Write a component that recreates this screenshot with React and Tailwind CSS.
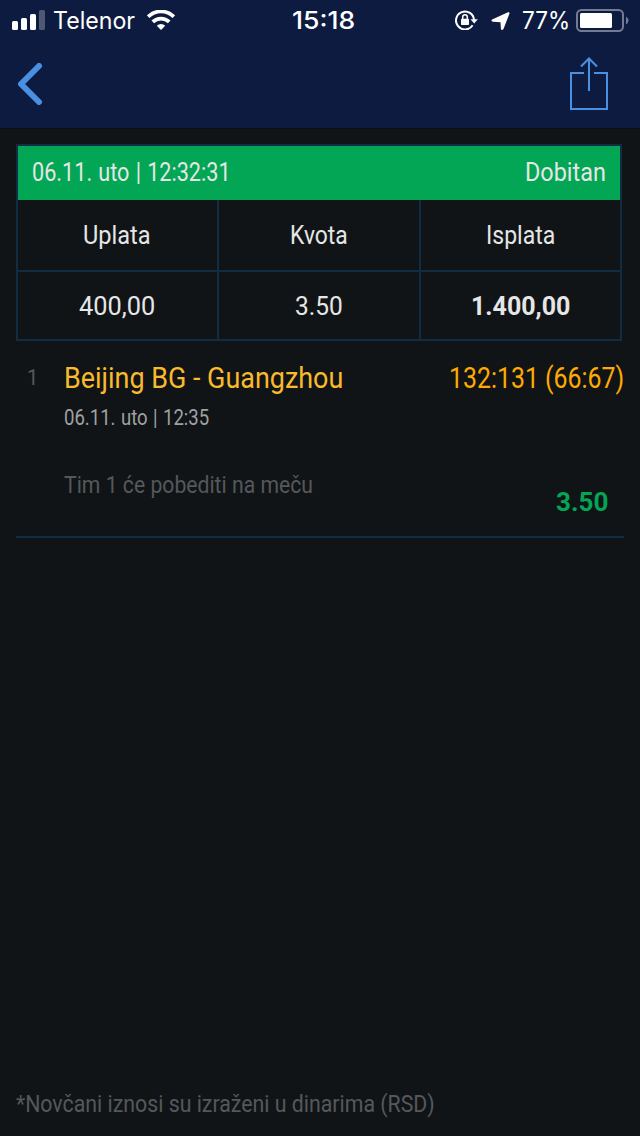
import { useLayoutEffect, useRef, useState } from 'react';

// Condenses a single line of text to the width of its box.
function Fit({ className, children }) {
  const outer = useRef(null);
  const inner = useRef(null);
  const [scale, setScale] = useState(1);

  useLayoutEffect(() => {
    const measure = () => setScale(outer.current.clientWidth / inner.current.offsetWidth);
    measure();
    document.fonts?.ready.then(measure);
  }, [children]);

  return (
    <span ref={outer} className={`block shrink-0 text-left whitespace-nowrap ${className}`}>
      <span ref={inner} className="inline-block origin-left align-top" style={{ transform: `scaleX(${scale})` }}>
        {children}
      </span>
    </span>
  );
}

function StatusBar() {
  return (
    <div className="flex h-10 items-center pl-3 font-['Inter',sans-serif] text-[24px] leading-[38px] text-white">
      <svg className="h-5 w-[33px]" viewBox="0 0 33 20" fill="currentColor">
        <rect x="0" y="11" width="6" height="9" rx="1.5" />
        <rect x="9" y="8" width="6" height="12" rx="1.5" />
        <rect x="18" y="4" width="6" height="16" rx="1.5" />
        <rect x="27" y="0" width="6" height="20" rx="1.5" opacity=".27" />
      </svg>
      <Fit className="ml-2 w-[82px] pt-[2px]">Telenor</Fit>
      <svg className="ml-3 h-5 w-7" viewBox="0 0 28 20">
        <g fill="none" stroke="currentColor" strokeWidth="3.7">
          <path d="M1.2 6.7A18.3 18.3 0 0 1 26.8 6.7" />
          <path d="M5.8 11.9A11.7 11.7 0 0 1 22.2 11.9" />
        </g>
        <path d="M14 20l-4.2-4.2a6 6 0 0 1 8.4 0z" fill="currentColor" />
      </svg>
      <Fit className="ml-[117px] w-[63px] pt-[2px] font-medium">15:18</Fit>
      <svg className="ml-[100px] h-5 w-[23px]" viewBox="0 0 23 20">
        <path d="M17.6 15.3A9 9 0 1 1 19 10" fill="none" stroke="currentColor" strokeWidth="2" />
        <path d="M15.5 9.3h7.3L19.2 13.5z" fill="currentColor" />
        <rect x="6" y="8.8" width="8" height="6.2" rx=".8" fill="currentColor" />
        <path d="M7.7 9V7a2.3 2.3 0 0 1 4.6 0v2" fill="none" stroke="currentColor" strokeWidth="1.5" />
      </svg>
      <svg className="mt-[2px] ml-[13px] h-[19px] w-[19px]" viewBox="0 0 19 19" fill="currentColor">
        <path d="M17 .3Q18.9-.2 18.4 1.7L12.6 16.8Q11 19.3 9.9 17L9.5 10.2 2 9.8Q-.6 8.9 1.1 7.5z" />
      </svg>
      <Fit className="ml-3 w-12 pt-[2px]">77%</Fit>
      <svg className="mt-[2px] ml-[6px] h-6 w-[54px]" viewBox="0 0 54 24">
        <rect x="1" y="1" width="46" height="21" rx="4.5" fill="none" stroke="#737b92" strokeWidth="2" />
        <rect x="4" y="4" width="32" height="15" rx="1.5" fill="white" />
        <path d="M50 7.5Q55 11.5 50 15.5z" fill="#737b92" />
      </svg>
    </div>
  );
}

export default function App() {
  return (
    <main className="flex h-[1136px] w-[640px] flex-col overflow-hidden bg-[#101417] font-['Roboto',sans-serif] text-[26px] text-[#e6e6e6]">
      <header className="h-32 bg-[#0e1b40]">
        <StatusBar />
        <nav className="flex h-[88px] items-start justify-between pr-8 pl-[17px] text-[#4a90e2]">
          <svg className="mt-[23px] h-[42px] w-[26px]" viewBox="0 0 26 42" fill="none" stroke="currentColor" strokeWidth="6" strokeLinecap="round" strokeLinejoin="round">
            <path d="M22 3L4 21l18 18" />
          </svg>
          <svg className="mt-[17px] h-[53px] w-[38px]" viewBox="0 0 38 53" fill="none" stroke="currentColor" strokeWidth="2">
            <path d="M14 16H1v36h36V16H24M19 34V2M11 9.5l8-8 8 8" />
          </svg>
        </nav>
      </header>
      <div className="h-px bg-[#0b0d0f]" />

      <section className="mt-[15px] ml-4 h-[197px] w-[606px] border-2 border-[#112d43] bg-[#111417]">
        <div className="flex h-[54px] justify-between bg-[#02a654] px-[14px] leading-[53px]">
          <Fit className="w-[199px] [word-spacing:1px]">06.11. uto | 12:32:31</Fit>
          <Fit className="w-[81px]">Dobitan</Fit>
        </div>
        <div className="grid h-[139px] grid-cols-[199px_200px_199px] grid-rows-[70px_67px] gap-[2px] bg-[#112d43] leading-[70px] *:flex *:justify-center *:bg-[#111417]">
          <div className="pr-[2px]"><Fit className="w-[68px]">Uplata</Fit></div>
          <div><Fit className="w-[58px]">Kvota</Fit></div>
          <div><Fit className="w-[69px]">Isplata</Fit></div>
          <div className="pr-[2px] leading-[68px]"><Fit className="w-[76px]">400,00</Fit></div>
          <div className="leading-[68px]"><Fit className="w-[48px]">3.50</Fit></div>
          <div className="leading-[68px] font-bold"><Fit className="w-[99px]">1.400,00</Fit></div>
        </div>
      </section>

      <article className="mr-4 ml-4 flex h-[197px] border-b-2 border-[#112d43]">
        <div className="w-12 pt-[21px] pl-[11px] text-[22px] leading-8 text-[#55585a]">
          <Fit className="w-[11px]">1</Fit>
        </div>
        <div className="flex-1 pt-[17px]">
          <Fit className="w-[279px] text-[30px] leading-10 text-[#f9ba2b]">Beijing BG - Guangzhou</Fit>
          <Fit className="mt-1 w-[145px] text-[22px] leading-8 text-[#a0a1a2] [word-spacing:1px]">06.11. uto | 12:35</Fit>
          <Fit className="mt-[35px] w-[249px] text-[24px] leading-8 text-[#55585a]">Tim 1 će pobediti na meču</Fit>
        </div>
        <div className="flex flex-col items-end pt-[17px]">
          <Fit className="w-[175px] text-[30px] leading-10 text-[#ffaa00]">132:131 (66:67)</Fit>
          <Fit className="mt-[88px] mr-4 w-[52px] leading-8 font-bold text-[#02a654]">3.50</Fit>
        </div>
      </article>

      <footer className="mt-auto pb-4 pl-4 text-[24px] leading-8 text-[#55585a]">
        <Fit className="w-[419px]">*Novčani iznosi su izraženi u dinarima (RSD)</Fit>
      </footer>
    </main>
  );
}
